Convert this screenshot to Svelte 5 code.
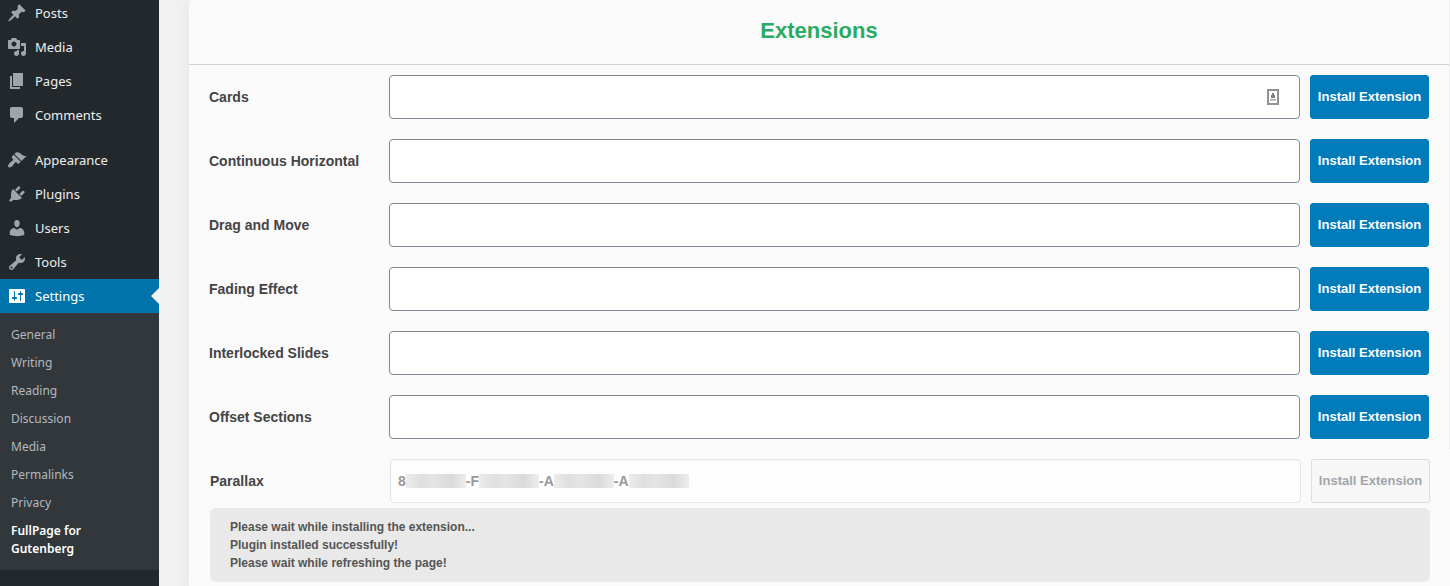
<script>
  const topMenu = [
    { name: 'Posts', d: 'M10.44 3.02l1.82-1.82 6.36 6.35-1.83 1.82c-1.05-.68-2.48-.57-3.41.36l-.75.75c-.92.93-1.04 2.35-.35 3.41l-1.83 1.82-2.41-2.41-2.8 2.79c-.42.42-3.38 2.71-3.8 2.29s1.86-3.39 2.28-3.81l2.79-2.79L4.1 9.36l1.83-1.82c1.05.69 2.48.57 3.4-.36l.75-.75c.93-.92 1.05-2.35.36-3.41z' },
    { name: 'Media', d: 'M13 11V4c0-.55-.45-1-1-1h-1.67L9 1H5L3.67 3H2c-.55 0-1 .45-1 1v7c0 .55.45 1 1 1h10c.55 0 1-.45 1-1zM7 4.5c1.38 0 2.5 1.12 2.5 2.5S8.38 9.5 7 9.5 4.5 8.38 4.5 7 5.62 4.5 7 4.5zM14 6h5v10.5c0 1.38-1.12 2.5-2.5 2.5S14 17.88 14 16.5s1.12-2.5 2.5-2.5c.17 0 .34.02.5.05V9h-3V6zm-4 8.05V13h2v3.5c0 1.38-1.12 2.5-2.5 2.5S7 17.88 7 16.5 8.12 14 9.5 14c.17 0 .34.02.5.05z' },
    { name: 'Pages', d: 'M6 15V2h10v13H6zm-1 1h8v2H3V5h2v11z' },
    { name: 'Comments', d: 'M5 2h9c1.1 0 2 .9 2 2v7c0 1.1-.9 2-2 2h-2l-5 5v-5H5c-1.1 0-2-.9-2-2V4c0-1.1.9-2 2-2z' },
    { name: 'Appearance', separated: true, d: 'M14.48 11.06L7.41 3.99l1.5-1.5c.5-.56 2.3-.47 3.51.32 1.21.8 1.43 1.28 2.91 2.1 1.18.64 2.45 1.26 4.45.85zm-.71.71L6.7 4.7 4.93 6.47c-.39.39-.39 1.02 0 1.41l1.06 1.06c.39.39.39 1.03 0 1.42-.6.6-1.43 1.11-2.21 1.69-.35.26-.7.53-1.01.84C1.43 14.23.4 16.08 1.4 17.07c.99 1 2.84-.03 4.18-1.36.31-.31.58-.66.85-1.02.57-.78 1.08-1.61 1.69-2.21.39-.39 1.02-.39 1.41 0l1.06 1.06c.39.39 1.02.39 1.41 0z' },
    { name: 'Plugins', d: 'M13.11 4.36L9.87 7.6 8 5.73l3.24-3.24c.35-.34 1.05-.2 1.56.32.52.51.66 1.21.31 1.55zm-8 1.77l.91-1.12 9.01 9.01-1.19.84c-.71.71-2.63 1.16-3.82 1.16H6.14L4.9 17.26c-.59.59-1.54.59-2.12 0-.59-.58-.59-1.53 0-2.12l1.24-1.24v-3.88c0-1.13.4-3.19 1.09-3.89zm7.26 3.97l3.24-3.24c.34-.35 1.04-.21 1.55.31.52.51.66 1.21.31 1.55l-3.24 3.25z' },
    { name: 'Users', d: 'M10 9.25c-2.27 0-2.73-3.44-2.73-3.44C7 4.02 7.82 2 9.97 2c2.16 0 2.98 2.02 2.71 3.81 0 0-.41 3.44-2.68 3.44zm0 2.57L12.72 10c2.39 0 4.52 2.33 4.52 4.53v2.49s-3.65 1.13-7.24 1.13c-3.65 0-7.24-1.13-7.24-1.13v-2.49c0-2.25 1.94-4.48 4.47-4.48z' },
    { name: 'Tools', d: 'M16.68 9.77c-1.34 1.34-3.3 1.67-4.95.99l-5.41 6.52c-.99.99-2.59.99-3.58 0s-.99-2.59 0-3.57l6.52-5.42c-.68-1.65-.35-3.61.99-4.95 1.28-1.28 3.12-1.62 4.72-1.06l-2.89 2.89 2.82 2.82 2.86-2.87c.53 1.58.18 3.39-1.08 4.65zM3.81 16.21c.4.39 1.04.39 1.43 0 .4-.4.4-1.04 0-1.43-.39-.4-1.03-.4-1.43 0-.39.39-.39 1.03 0 1.43z' },
    { name: 'Settings', current: true, d: 'M18 16V4c0-.55-.45-1-1-1H3c-.55 0-1 .45-1 1v12c0 .55.45 1 1 1h14c.55 0 1-.45 1-1zM8 11h1c.55 0 1 .45 1 1s-.45 1-1 1H8v1.5c0 .28-.22.5-.5.5s-.5-.22-.5-.5V13H6c-.55 0-1-.45-1-1s.45-1 1-1h1V5.5c0-.28.22-.5.5-.5s.5.22.5.5V11zm5-2h-1c-.55 0-1-.45-1-1s.45-1 1-1h1V5.5c0-.28.22-.5.5-.5s.5.22.5.5V7h1c.55 0 1 .45 1 1s-.45 1-1 1h-1v5.5c0 .28-.22.5-.5.5s-.5-.22-.5-.5V9z' }
  ];
  const subMenu = ['General', 'Writing', 'Reading', 'Discussion', 'Media', 'Permalinks', 'Privacy', 'FullPage for Gutenberg'];
  const extensions = ['Cards', 'Continuous Horizontal', 'Drag and Move', 'Fading Effect', 'Interlocked Slides', 'Offset Sections'];
  const keyParts = ['8', '-F', '-A', '-A'];
  const messages = ['Please wait while installing the extension...', 'Plugin installed successfully!', 'Please wait while refreshing the page!'];
</script>

<div class="admin">
  <nav class="sidebar">
    <ul class="menu">
      {#each topMenu as item}
        <li class:separated={item.separated}>
          <a href="#top" class:current={item.current}>
            <svg width="20" height="20" viewBox="0 0 20 20" aria-hidden="true"><path d={item.d} /></svg>
            <span>{item.name}</span>
          </a>
        </li>
      {/each}
    </ul>
    <ul class="submenu">
      {#each subMenu as name, i}
        <li><a href="#top" class:active={i === subMenu.length - 1}>{name}</a></li>
      {/each}
    </ul>
  </nav>

  <main>
    <section class="panel">
      <div class="available">
        <h1>Extensions</h1>
        <div class="rows">
          {#each extensions as name, i}
            <div class="row">
              <label for="key-{i}">{name}</label>
              <div class="field">
                <input id="key-{i}" type="text" />
                {#if i === 0}
                  <svg class="autofill" width="12" height="16" viewBox="0 0 12 16" aria-hidden="true">
                    <rect x="1" y="1" width="10" height="14" fill="#fff" stroke="#929292" stroke-width="2" />
                    <path d="M5 4h2v2h1v3H4V6h1z" fill="#808080" />
                    <path d="M3 10h6v1H3z" fill="#a8a8a8" />
                    <path d="M3 11h6v1H3z" fill="#c8c8c8" />
                  </svg>
                {/if}
              </div>
              <button type="button">Install Extension</button>
            </div>
          {/each}
        </div>
      </div>

      <div class="installing">
        <div class="row">
          <label for="key-parallax">Parallax</label>
          <div class="field">
            <input id="key-parallax" type="text" disabled />
            <div class="key">
              {#each keyParts as part}
                <span>{part}</span><i></i>
              {/each}
            </div>
          </div>
          <button type="button" disabled>Install Extension</button>
        </div>
        <div class="notice">
          {#each messages as message}
            <p>{message}</p>
          {/each}
        </div>
      </div>
    </section>
  </main>
</div>

<style>
  :global(body) {
    margin: 0;
    background: #f1f1f1;
    overflow: hidden;
  }
  .admin {
    display: flex;
    min-height: 100vh;
    font-family: "Liberation Sans", Arial, sans-serif;
    color: #444;
  }
  ul {
    list-style: none;
    margin: 0;
    padding: 0;
  }
  .sidebar {
    flex: none;
    width: 159px;
    background: #23282d;
    font-family: "Noto Sans", "Segoe UI", sans-serif;
  }
  .menu {
    margin-top: -4px;
  }
  .separated {
    margin-top: 11px;
  }
  .menu a {
    position: relative;
    display: flex;
    align-items: center;
    gap: 8px;
    height: 34px;
    padding-left: 7px;
    font-size: 13px;
    color: #eee;
    text-decoration: none;
  }
  .menu svg {
    fill: #a0a5aa;
  }
  .menu a.current {
    background: #0073aa;
    color: #fff;
  }
  .menu a.current svg {
    fill: #fff;
  }
  .menu a.current::after {
    content: "";
    position: absolute;
    right: 0;
    top: 9px;
    border: 8px solid transparent;
    border-left: 0;
    border-right-color: #f1f1f1;
  }
  .submenu {
    padding: 8px 0 7px;
    background: #32373c;
  }
  .submenu a {
    display: block;
    padding: 5px 50px 5px 11px;
    font-size: 12px;
    line-height: 18px;
    color: #b4b9be;
    text-decoration: none;
  }
  .submenu a.active {
    font-weight: 600;
    color: #fff;
  }
  main {
    flex: 1;
    min-width: 0;
    display: flex;
    padding-left: 30px;
  }
  .panel {
    flex: 1;
    min-width: 0;
    background: #fafafa;
    border-top-left-radius: 4px;
    box-shadow: 0 4px 18px rgba(0, 0, 0, 0.06);
    clip-path: inset(0 0 0 -30px);
  }
  .available {
    border-right: 1px solid #eee;
  }
  h1 {
    margin: 0;
    padding: 16px 20px 18px;
    border-bottom: 1px solid #d2d2d2;
    font-size: 22px;
    line-height: 30px;
    text-align: center;
    color: #2aab65;
  }
  .rows {
    display: grid;
    gap: 20px;
    padding: 10px 20px;
  }
  .row {
    display: grid;
    grid-template-columns: 170px minmax(0, 1fr) 119px;
    gap: 10px;
    align-items: center;
  }
  label {
    font-size: 14px;
    font-weight: bold;
  }
  .field {
    position: relative;
  }
  input {
    display: block;
    box-sizing: border-box;
    width: 100%;
    height: 44px;
    margin: 0;
    padding: 0 8px;
    border: 1px solid #7e8993;
    border-radius: 4px;
    background: #fff;
    font: bold 14px "Liberation Sans", Arial, sans-serif;
  }
  input:disabled {
    border-color: #e4e5e6;
    background: #fdfdfd;
    box-shadow: inset 0 1px 2px rgba(0, 0, 0, 0.04);
  }
  .autofill {
    position: absolute;
    right: 21px;
    top: 14px;
  }
  .key {
    position: absolute;
    inset: 0 auto 0 8px;
    display: flex;
    align-items: center;
    font-size: 14px;
    font-weight: bold;
    color: #999;
  }
  .key i {
    width: 60px;
    height: 14px;
    background: linear-gradient(90deg, #ececec, #dfdfdf 25%, #e5e5e5 45%, #dadada 75%, #ededed);
  }
  button {
    height: 44px;
    padding: 0 0 2px;
    border: 1px solid #007cba;
    border-radius: 3px;
    background: #007cba;
    font: bold 13px "Liberation Sans", Arial, sans-serif;
    color: #fff;
    white-space: nowrap;
  }
  button:disabled {
    border-color: #ddd;
    background: #f7f7f7;
    color: #a0a5aa;
  }
  .installing {
    padding: 10px 20px 4px 21px;
  }
  .notice {
    margin-top: 5px;
    padding: 10px 20px;
    border-radius: 6px;
    background: #e9e9e9;
    font-size: 12px;
    font-weight: bold;
    line-height: 18px;
    color: #555;
  }
  .notice p {
    margin: 0;
  }
</style>
